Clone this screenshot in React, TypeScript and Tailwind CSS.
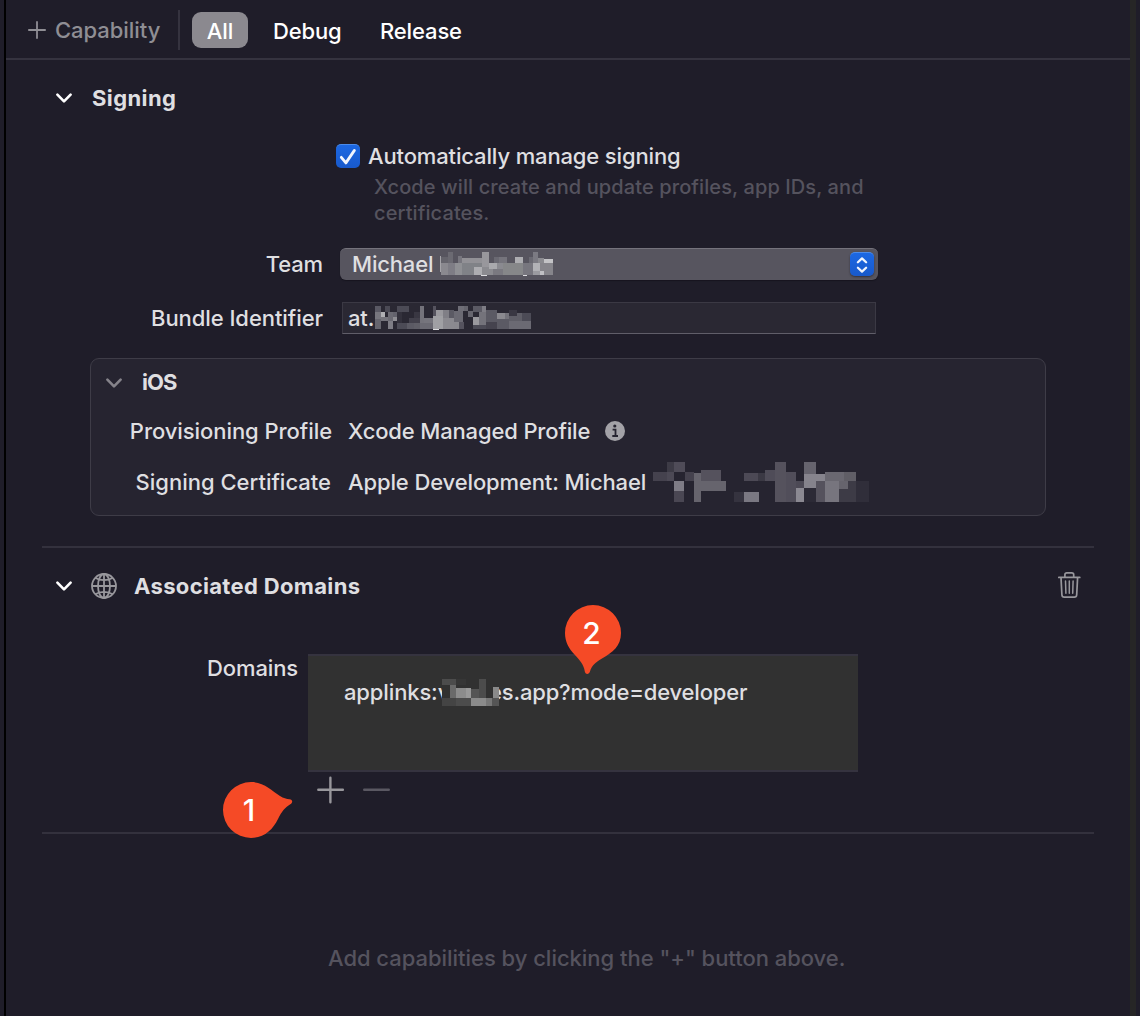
import type { ReactNode } from "react";

type Block = [number, number, number, number, string];

const TEAM_BLOCKS: Block[] = [
  [330, 48, 3, 48, "#a5a4a9"], [333, 52, 22, 18, "#65646c"], [333, 70, 22, 35, "#8a898f"], [355, 36, 14, 34, "#6b6a72"],
  [355, 68, 20, 37, "#7e7d85"], [384, 47, 12, 22, "#77767e"], [375, 68, 22, 37, "#8f9094"], [396, 54, 60, 15, "#929196"],
  [397, 69, 35, 36, "#808287"], [432, 69, 24, 12, "#808287"], [456, 36, 21, 46, "#98979c"], [432, 81, 24, 24, "#adadb1"],
  [456, 82, 21, 23, "#8b8b90"], [477, 69, 24, 17, "#a9a9ad"], [477, 86, 13, 19, "#8b8b90"], [490, 86, 30, 19, "#7a7980"],
  [501, 69, 19, 17, "#8a8a90"], [493, 51, 15, 18, "#6a6972"], [508, 51, 23, 18, "#75747c"], [520, 69, 60, 36, "#868789"],
  [555, 51, 24, 18, "#adadb1"], [580, 69, 28, 36, "#77767e"], [596, 51, 14, 18, "#6a6972"], [610, 36, 14, 33, "#7b7a82"],
  [608, 69, 22, 24, "#b2b2b6"], [624, 54, 18, 15, "#8b8b90"], [642, 57, 27, 12, "#c3c3c6"], [630, 69, 39, 36, "#86858b"],
  [608, 93, 22, 12, "#9b9ba0"], [630, 93, 12, 12, "#c0c0c4"], [453, 105, 18, 3, "#dddde0"], [580, 105, 12, 3, "#dddde0"],
];

const BUNDLE_BLOCKS: Block[] = [
  [135, 198, 17, 18, "#5a5964"], [135, 216, 17, 20, "#77767e"], [152, 216, 13, 14, "#b0b0b4"], [135, 236, 17, 31, "#66656e"],
  [152, 230, 22, 14, "#75747c"], [165, 198, 15, 18, "#4b4a55"], [174, 216, 15, 28, "#6b6a73"], [189, 216, 13, 14, "#64636d"],
  [189, 230, 13, 14, "#8f8e94"], [174, 244, 15, 23, "#7e7d85"], [201, 198, 36, 18, "#4c4b56"], [201, 216, 14, 32, "#33313c"],
  [201, 248, 30, 19, "#4c4b56"], [231, 248, 22, 19, "#5b5a64"], [253, 216, 17, 17, "#393742"], [237, 233, 33, 15, "#42404b"],
  [253, 248, 17, 19, "#5f5e67"], [270, 198, 12, 50, "#74737b"], [282, 233, 26, 15, "#76757d"], [270, 248, 38, 19, "#6b6a73"],
  [308, 198, 10, 30, "#55535e"], [318, 210, 22, 18, "#9a999e"], [340, 210, 18, 23, "#807f86"], [308, 228, 32, 39, "#a0a0a4"],
  [340, 233, 32, 34, "#8b8a90"], [358, 210, 14, 23, "#5b5a64"], [372, 212, 28, 33, "#6b6a73"], [385, 198, 17, 14, "#6f6e77"],
  [372, 245, 14, 22, "#8a898f"], [386, 245, 16, 22, "#55535e"], [402, 198, 12, 14, "#66656e"], [414, 213, 16, 18, "#66656e"],
  [430, 198, 26, 18, "#5b5a64"], [456, 198, 12, 18, "#7e7d85"], [430, 231, 18, 23, "#9a999e"], [448, 216, 20, 38, "#74737b"],
  [430, 254, 38, 13, "#4c4b56"], [468, 210, 33, 35, "#5b5a64"], [468, 245, 33, 22, "#45434e"], [501, 219, 24, 18, "#8a898f"],
  [525, 219, 12, 18, "#74737b"], [501, 237, 36, 30, "#5b5a64"], [537, 210, 24, 18, "#393742"], [537, 228, 24, 16, "#5f5e67"],
  [561, 219, 14, 25, "#5f5e67"], [575, 219, 28, 25, "#4c4b56"], [537, 244, 66, 23, "#6b6a73"], [310, 267, 18, 3, "#dddde0"],
];

const CERT_BLOCKS: Block[] = [
  [219, 186, 42, 27, "#45424e"], [261, 156, 21, 30, "#3d3b46"], [282, 156, 33, 30, "#4f4c58"], [261, 186, 21, 27, "#4c4955"],
  [315, 186, 27, 27, "#45424e"], [282, 213, 30, 30, "#7e7c86"], [282, 243, 30, 33, "#4a4753"], [342, 189, 21, 87, "#66646d"],
  [363, 180, 60, 33, "#55525d"], [363, 213, 75, 30, "#66646d"], [462, 246, 30, 30, "#35333f"], [492, 246, 45, 30, "#7a7882"],
  [492, 189, 42, 24, "#4c4955"], [534, 189, 21, 24, "#3b3944"], [555, 180, 30, 33, "#4f4c58"], [585, 156, 33, 120, "#55525d"],
  [618, 186, 30, 90, "#514e5a"], [648, 213, 24, 21, "#4c4955"], [648, 234, 24, 42, "#8b8992"], [672, 156, 36, 36, "#66646e"],
  [672, 192, 63, 21, "#86848d"], [672, 213, 36, 21, "#85838c"], [672, 234, 36, 42, "#2c2a36"], [708, 213, 27, 63, "#55525d"],
  [735, 186, 57, 27, "#6a6871"], [792, 186, 36, 27, "#605e66"], [735, 213, 42, 63, "#77757e"], [777, 213, 27, 24, "#66646d"],
  [777, 237, 27, 39, "#3d3b46"], [804, 213, 24, 63, "#3d3b46"], [828, 213, 39, 63, "#302e3a"],
];

const DOMAIN_BLOCKS: Block[] = [
  [66, 267, 153, 81, "#313131"], [66, 267, 42, 18, "#4c4c4c"], [108, 267, 30, 18, "#363636"], [90, 285, 18, 39, "#6a6a6a"],
  [108, 294, 30, 30, "#8c8c8c"], [138, 294, 15, 30, "#999999"], [153, 297, 24, 27, "#555555"], [177, 267, 21, 57, "#4c4c4c"],
  [66, 324, 42, 24, "#444444"], [108, 324, 45, 24, "#4c4c4c"], [153, 324, 45, 24, "#8b8b8b"], [198, 324, 18, 24, "#777777"],
  [219, 291, 18, 33, "#8a8a8a"], [216, 324, 21, 24, "#555555"],
];

function Mosaic({ blocks, viewBox, className }: { blocks: Block[]; viewBox: string; className: string }) {
  return (
    <svg viewBox={viewBox} className={className} shapeRendering="crispEdges" aria-hidden="true">
      {blocks.map(([x, y, w, h, fill], i) => (
        <rect key={i} x={x} y={y} width={w} height={h} fill={fill} />
      ))}
    </svg>
  );
}

function Chevron({ className }: { className: string }) {
  return (
    <svg viewBox="0 0 16 10" className={`h-2.5 w-4 shrink-0 ${className}`} fill="none" stroke="currentColor" strokeWidth="2.6" strokeLinecap="round" strokeLinejoin="round">
      <path d="M1.400 1.600 8 8.400l6.600-6.800" />
    </svg>
  );
}

function Globe() {
  return (
    <svg viewBox="0 0 26 26" className="size-[26px] shrink-0 text-[#98979c]" fill="none" stroke="currentColor" strokeWidth="1.8">
      <circle cx="13" cy="13" r="12" />
      <ellipse cx="13" cy="13" rx="6" ry="12" />
      <path d="M13 1v24M1 13h24M4.300 4.800c4.600 3.200 12.800 3.200 17.400 0M4.300 21.200c4.600-3.200 12.800-3.200 17.400 0" />
    </svg>
  );
}

function Trash() {
  return (
    <svg viewBox="0 0 24 28" className="h-7 w-6 shrink-0 text-[#98979c]" fill="none" stroke="currentColor" strokeWidth="1.7" strokeLinecap="round" strokeLinejoin="round">
      <path d="M1.800 6.400h21M7.900 6.200V3.800Q7.900 1.900 9.800 1.900h5q1.900 0 1.900 1.900V6.200M4 6.600l.9 17.200q.1 2.400 2.400 2.400h10q2.300 0 2.400-2.400l.9-17.200" />
      <path d="M8.500 10l.4 12.200M12.300 10v12.200M16.100 10l-.4 12.200" strokeWidth="1.500" />
    </svg>
  );
}

function Label({ children, className }: { children: ReactNode; className: string }) {
  return <div className={`shrink-0 text-right ${className}`}>{children}</div>;
}

export default function App() {
  return (
    <div className="flex h-[1016px] w-[1140px] overflow-hidden whitespace-nowrap bg-[#1f1d29] font-['Inter',sans-serif] text-[22px] font-[450] leading-7 tracking-[-0.13px] text-[#dfdfe1]">
      <div className="w-1 shrink-0" />
      <div className="w-0.5 shrink-0 bg-black" />
      <main className="flex w-[1124px] shrink-0 flex-col">
        <header className="flex h-[60px] shrink-0 border-b-2 border-[#35333f]">
          <button className="flex h-[60px] items-center pl-[22px] text-[#8f8e94]">
            <svg viewBox="0 0 18 18" className="size-[18px]" stroke="currentColor" strokeWidth="1.800" strokeLinecap="round">
              <path d="M9 .9v16.200M.9 9h16.200" />
            </svg>
            <span className="ml-[9px] w-[105px] text-left tracking-[-0.04px]">Capability</span>
          </button>
          <div className="ml-[18px] mt-2.5 h-10 w-0.5 bg-[#35333f]" />
          <nav className="flex h-[60px] items-center pt-px font-medium text-white">
            <button className="-mt-px ml-3 flex h-9 w-14 items-center justify-center rounded-[9px] bg-[#8b898f] pt-0.5">All</button>
            <button className="ml-6 mt-px w-[72px] pl-px text-left">Debug</button>
            <button className="ml-9 mt-px text-left">Release</button>
          </nav>
        </header>

        <section className="flex flex-col">
          <div className="flex h-[78px] items-center pb-0.5 pl-[50px]">
            <Chevron className="-mt-px text-white" />
            <h2 className="ml-5 font-bold tracking-[0.4px]">Signing</h2>
          </div>
          <div className="flex h-9 items-center pl-[330px]">
            <div className="flex size-6 items-center justify-center rounded-[5px] border-t border-[#4b8bea] bg-linear-to-b from-[#1c68e3] to-[#1859cb]">
              <svg viewBox="0 0 18 18" className="size-[18px]" fill="none" stroke="#f1f5fd" strokeWidth="2.800" strokeLinecap="round" strokeLinejoin="round">
                <path d="M2.300 9.300 6.900 14.900 15.400 2.400" />
              </svg>
            </div>
            <span className="ml-2 tracking-[-0.14px]">Automatically manage signing</span>
          </div>
          <p className="ml-[368px] text-[20px] leading-[26px] tracking-[0.1px] text-[#55535e]">
            Xcode will create and update profiles, app IDs, and
            <br />
            certificates.
          </p>
          <div className="mt-[22px] flex h-8 items-center">
            <Label className="w-[317px]">Team</Label>
            <div className="ml-[17px] flex h-8 w-[538px] items-center rounded-md border-t border-[#75737c] bg-[#57555f] pl-3 pr-1 shadow-[0_1px_1px_#17151f]">
              <span className="-mt-0.5 w-[82px] tracking-[-0.18px]">Michael</span>
              <Mosaic blocks={TEAM_BLOCKS} viewBox="330 36 339 72" className="-mt-px ml-[6px] h-6 w-[113px]" />
              <span className="-mt-px ml-auto flex size-6 items-center justify-center rounded-[5px] border-t border-[#4b8bea] bg-linear-to-b from-[#1c68e3] to-[#1859cb] shadow-[0_1px_2px_#33313c]">
                <svg viewBox="0 0 12 16" className="h-4 w-3" fill="none" stroke="#f1f5fd" strokeWidth="2.200" strokeLinecap="round" strokeLinejoin="round">
                  <path d="M1.900 5.300 6 1.400l4.100 3.900M1.900 10.700 6 14.600l4.100-3.900" />
                </svg>
              </span>
            </div>
          </div>
          <div className="mt-[22px] flex h-8 items-center">
            <Label className="w-[317px] tracking-[-0.06px]">Bundle Identifier</Label>
            <div className="ml-[19px] flex h-8 w-[534px] items-center border border-[#3b3944] border-b-[#605e69] bg-[#2a2833] pl-[5px]">
              <span className="w-[27px]">at.</span>
              <Mosaic blocks={BUNDLE_BLOCKS} viewBox="135 198 468 72" className="h-6 w-[156px]" />
            </div>
          </div>

          <div className="ml-[84px] mt-6 flex h-[158px] w-[956px] flex-col rounded-[9px] border border-[#3e3c47] bg-[#262430]">
            <div className="flex h-[46px] items-center pl-[15px]">
              <Chevron className="mt-0.5 text-[#85838a]" />
              <h3 className="ml-5 font-bold tracking-[-0.9px]">iOS</h3>
            </div>
            <div className="flex h-[52px] items-center">
              <Label className="w-[241px] tracking-[-0.06px]">Provisioning Profile</Label>
              <span className="ml-4 w-[243px] tracking-[-0.15px]">Xcode Managed Profile</span>
              <svg viewBox="0 0 20 20" className="ml-3.5 size-5">
                <circle cx="10" cy="10" r="10" fill="#a3a2a7" />
                <circle cx="9.800" cy="5" r="1.600" fill="#262430" />
                <path d="M7.600 8.600h2.900v6M7.300 15h5.700" fill="none" stroke="#262430" strokeWidth="1.800" />
              </svg>
            </div>
            <div className="flex h-[50px] items-center">
              <Label className="w-[240px] tracking-[0px]">Signing Certificate</Label>
              <span className="ml-[17px] w-[305px] tracking-[-0.12px]">Apple Development: Michael</span>
              <Mosaic blocks={CERT_BLOCKS} viewBox="219 156 648 120" className="h-10 w-[216px]" />
            </div>
          </div>
        </section>

        <div className="ml-9 mt-[30px] h-0.5 w-[1052px] shrink-0 bg-[#33313d]" />

        <section className="flex flex-col">
          <div className="flex h-[76px] items-center pl-[50px] pr-[49px]">
            <Chevron className="text-white" />
            <div className="ml-[19px]">
              <Globe />
            </div>
            <h2 className="ml-[17px] font-bold tracking-[0.34px]">Associated Domains</h2>
            <button className="-mt-0.5 ml-auto">
              <Trash />
            </button>
          </div>
          <div className="mt-[30px] flex">
            <Label className="w-[292px]">Domains</Label>
            <div className="relative ml-2.5 h-[118px] w-[550px] border-y-2 border-[#35333f] bg-[#313131]">
              <div className="flex pl-9 pt-[22px]">
                <span className="w-[145px]">applinks:v</span>
                <span className="tracking-[-0.17px]">es.app?mode=developer</span>
              </div>
              <Mosaic blocks={DOMAIN_BLOCKS} viewBox="66 267 171 81" className="absolute left-[134px] top-[23px] h-[27px] w-[57px]" />
              <div className="absolute left-[256px] top-[-52px] h-[72px] w-[58px]">
                <svg viewBox="0 0 58 72" className="h-[72px] w-[58px]">
                  <path d="M29 1A28 28 0 0 0 1 29c0 9 4 15.500 9.500 21.500 5 5.500 9.500 10.500 10.200 16.500.4 3.700 4.300 3.900 5.300.5 1.500-5.500 5-9 12-13C48.500 48.500 57 42 57 29A28 28 0 0 0 29 1Z" fill="#f54a26" />
                </svg>
                <span className="absolute left-0 top-[14px] w-[55px] text-center text-[30px] leading-[30px] text-white">2</span>
              </div>
            </div>
          </div>
          <div className="relative flex h-[60px] items-start pl-[311px] pt-[4px]">
            <svg viewBox="0 0 74 28" className="h-7 w-[74px]" fill="none" strokeWidth="2.400" strokeLinecap="round">
              <path d="M1.300 13.700h24.600M13.400 1.700v24.600" stroke="#98979c" />
              <path d="M47.200 13.700h24.600" stroke="#5a5862" />
            </svg>
            <div className="absolute left-[216px] top-[9px] h-[58px] w-[72px]">
              <svg viewBox="0 0 72 58" className="h-[58px] w-[72px]">
                <path d="M1 29A28 28 0 0 1 29 1c13 0 20.500 8.500 29 14 3.500 2.200 6.500 3 9.500 3.200 3.500.3 3.400 3.500.8 5.100-5 3-8.500 7-12.300 14.700C51 48.500 42 57 29 57A28 28 0 0 1 1 29Z" fill="#f54a26" />
              </svg>
              <span className="absolute left-0 top-[14px] w-[54px] text-center text-[30px] leading-[30px] text-white">1</span>
            </div>
          </div>
        </section>

        <div className="ml-9 h-0.5 w-[1052px] shrink-0 bg-[#33313d]" />
        <p className="ml-[322px] mt-[110px] tracking-[-0.03px] text-[#55535e]">Add capabilities by clicking the "+" button above.</p>
      </main>
      <div className="w-1.5 shrink-0 bg-[#262626]" />
    </div>
  );
}
